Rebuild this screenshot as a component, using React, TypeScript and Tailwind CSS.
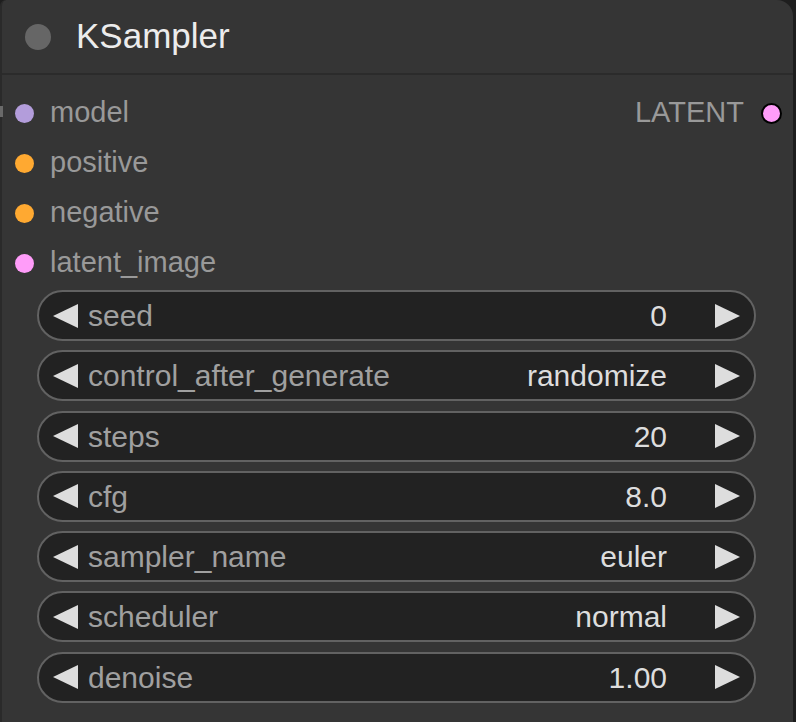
const INPUTS = [
  { name: 'model', color: 'bg-[#b39ddb]' },
  { name: 'positive', color: 'bg-[#ffa931]' },
  { name: 'negative', color: 'bg-[#ffa931]' },
  { name: 'latent_image', color: 'bg-[#ff9cf9]' },
]

const WIDGETS = [
  { label: 'seed', value: '0' },
  { label: 'control_after_generate', value: 'randomize' },
  { label: 'steps', value: '20' },
  { label: 'cfg', value: '8.0' },
  { label: 'sampler_name', value: 'euler' },
  { label: 'scheduler', value: 'normal' },
  { label: 'denoise', value: '1.00' },
]

function Arrow({ dir }: { dir: 'left' | 'right' }) {
  return (
    <svg width="25" height="24" viewBox="0 0 25 24" className="shrink-0">
      <polygon
        points={dir === 'left' ? '25,0 25,24 0,12' : '0,0 0,24 25,12'}
        fill="#dddddd"
      />
    </svg>
  )
}

function Widget({ label, value }: { label: string; value: string }) {
  return (
    <div className="flex items-center h-[51px] w-[719px] ml-[35px] rounded-full border-2 border-[#626262] bg-[#222222] pl-[14px] pr-[14px]">
      <Arrow dir="left" />
      <span className="ml-[10px] text-[30px] text-[#a0a0a0]">{label}</span>
      <span className="ml-auto text-[30px] text-[#dddddd]">{value}</span>
      <span className="ml-[48px]">
        <Arrow dir="right" />
      </span>
    </div>
  )
}

export default function App() {
  return (
    <div
      className="w-[796px] h-[722px] overflow-hidden bg-[#1e1e1e]"
      style={{ fontFamily: '"Liberation Sans", Arial, sans-serif' }}
    >
      <div className="relative w-[793px] h-[740px] bg-[#353535] rounded-tr-[16px] rounded-tl-[6px] border-l-[2px] border-[#2a2a2a]">
        {/* incoming link stub */}
        <div className="absolute left-[-2px] top-[106px] w-[3px] h-[11px] bg-[#6a6a6a]" />

        <div className="flex items-center h-[75px] border-b-2 border-[#2b2b2b]">
          <div className="ml-[23px] w-[26px] h-[26px] rounded-full bg-[#666666]" />
          <span className="ml-[25px] text-[35px] text-[#ececec]">KSampler</span>
        </div>

        <div className="pt-[13px]">
          {INPUTS.map((input, i) => (
            <div key={input.name} className="flex items-center h-[50px]">
              <div className={`ml-[13px] w-[19px] h-[19px] rounded-full ${input.color}`} />
              <span className="ml-[16px] text-[29px] text-[#999999]">{input.name}</span>
              {i === 0 && (
                <div className="ml-auto mr-[11px] flex items-center">
                  <span className="text-[29px] text-[#999999]">LATENT</span>
                  <div className="ml-[17px] w-[21px] h-[21px] rounded-full bg-[#ff9cf9] border-2 border-black" />
                </div>
              )}
            </div>
          ))}
        </div>

        <div className="mt-[2px] flex flex-col gap-[9.3px]">
          {WIDGETS.map((w) => (
            <Widget key={w.label} label={w.label} value={w.value} />
          ))}
        </div>
      </div>
    </div>
  )
}
